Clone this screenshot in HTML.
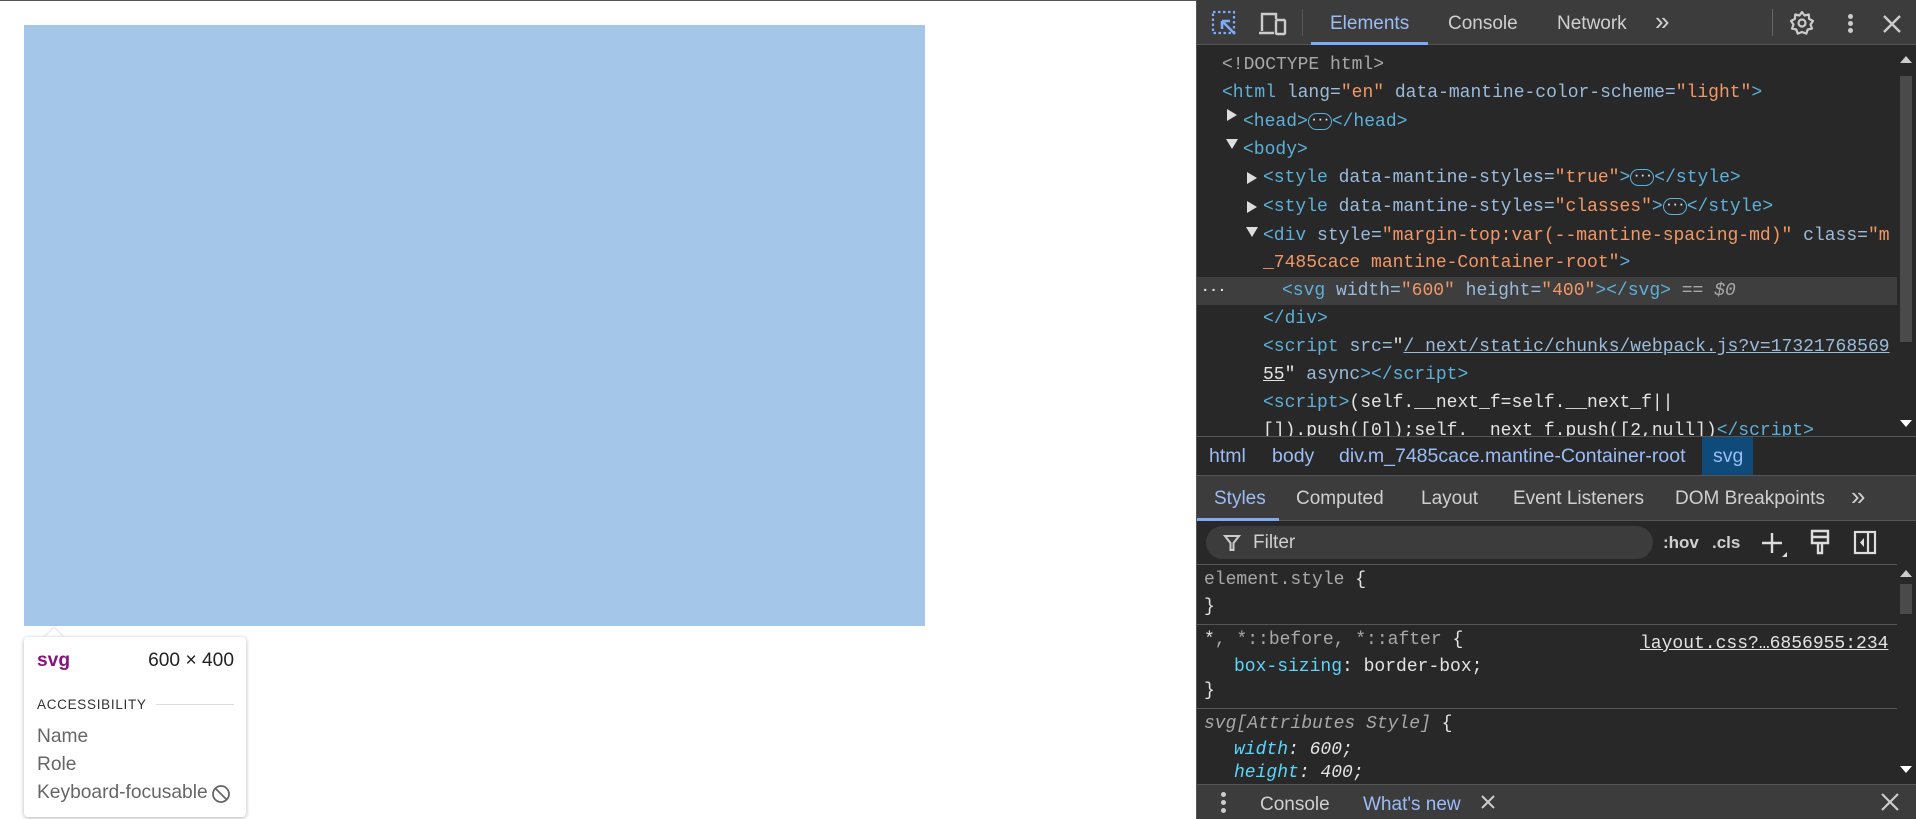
<!DOCTYPE html>
<html><head><style>
*{box-sizing:border-box;margin:0;padding:0}
body{width:1916px;height:819px;overflow:hidden;background:#fff;position:relative;font-family:"Liberation Sans",sans-serif}
.a{position:absolute}
.dt{left:1196px;top:0;width:720px;height:819px;background:#282828;border-left:1px solid #555}
.mono{font-family:"Liberation Mono",monospace;font-size:18px;white-space:pre;color:#e3e3e3}
.t{color:#5db0d7}.n{color:#9bbbdc}.v{color:#f29766}.g{color:#a8a8a8}
.ln{position:absolute;height:28px;line-height:28px}
.tab{position:absolute;font-size:19px;color:#cfcfcf;line-height:24px;white-space:nowrap}
.el{display:inline-block;width:24px;height:17px;border:1px solid #5db0d7;border-radius:9px;font-size:12px;line-height:13px;text-align:center;color:#e3e3e3;vertical-align:middle;font-weight:bold;letter-spacing:-1px}
.tri{position:absolute;width:0;height:0;border-top:6px solid transparent;border-bottom:6px solid transparent;border-left:10px solid #ddd;top:8px}
.trd{position:absolute;width:0;height:0;border-left:6px solid transparent;border-right:6px solid transparent;border-top:10px solid #ddd;top:9px}
</style></head><body>
<div class="a" style="left:0;top:0;width:1196px;height:1px;background:#555"></div>
<div class="a" style="left:24px;top:25px;width:901px;height:601px;background:#a4c6e8"></div>
<div class="a" style="left:44px;top:628px;width:0;height:0;border-left:10px solid transparent;border-right:10px solid transparent;border-bottom:10px solid #fff;filter:drop-shadow(0 -1px 1px rgba(0,0,0,.15))"></div>
<div class="a" style="left:24px;top:637px;width:222px;height:180px;background:#fff;border-radius:4px;box-shadow:0 1px 4px rgba(0,0,0,.3);font-size:19.2px">
<div class="a" style="left:13px;top:13px;color:#881280;font-weight:bold">svg</div>
<div class="a" style="right:12px;top:13px;color:#222">600 × 400</div>
<div class="a" style="left:13px;top:60px;font-size:13.5px;letter-spacing:.7px;color:#333">ACCESSIBILITY</div>
<div class="a" style="left:132px;top:67px;width:78px;height:1px;background:#ddd"></div>
<div class="a" style="left:13px;top:89px;color:#666">Name</div>
<div class="a" style="left:13px;top:117px;color:#666">Role</div>
<div class="a" style="left:13px;top:145px;color:#666">Keyboard-focusable</div>
<svg class="a" style="left:186px;top:146px" width="22" height="22"><circle cx="11" cy="11" r="8" fill="none" stroke="#666" stroke-width="1.8"/><path d="M5.5 5.5L16.5 16.5" stroke="#666" stroke-width="1.8"/></svg>
</div>

<div class="a dt">
<div class="a" style="left:0;top:0;width:720px;height:45px;background:#3c3c3c;border-bottom:1px solid #555"></div>
<svg class="a" style="left:14px;top:10px" width="28" height="28"><rect x="2" y="2" width="21" height="21" fill="none" stroke="#7cacf8" stroke-width="2.2" stroke-dasharray="2.5 2.5"/><path d="M11 11L24 24M11 11h8M11 11v8" stroke="#7cacf8" stroke-width="2.6" fill="none"/></svg>
<svg class="a" style="left:60px;top:10px" width="30" height="28"><path d="M5 21V4h14v5M2 23h15" stroke="#ccc" stroke-width="2.4" fill="none"/><rect x="19" y="10" width="9" height="14" rx="1" fill="none" stroke="#ccc" stroke-width="2.4"/></svg>
<div class="a" style="left:105px;top:9px;width:1px;height:27px;background:#555"></div>
<div class="tab" style="left:133px;top:12px;color:#9bbcf5">Elements</div>
<div class="a" style="left:114px;top:42px;width:117px;height:3px;background:#7cacf8"></div>
<div class="tab" style="left:251px;top:12px">Console</div>
<div class="tab" style="left:360px;top:12px">Network</div>
<div class="tab" style="left:458px;top:9px;font-size:26px">»</div>
<div class="a" style="left:575px;top:9px;width:1px;height:27px;background:#666"></div>
<svg class="a" style="left:591px;top:9px" width="28" height="28"><path d="M14 3l2.5 3.5 4.3-1 .3 4.4 3.9 2.1-2.5 3.5 1.5 4.1-4.3.9-1.4 4.1-4.3-1.6-4.3 1.6-1.4-4.1-4.3-.9 1.5-4.1L3 12l3.9-2.1.3-4.4 4.3 1z" fill="none" stroke="#ccc" stroke-width="2.2" stroke-linejoin="round"/><circle cx="14" cy="14" r="3.5" fill="none" stroke="#ccc" stroke-width="2.2"/></svg>
<div class="a" style="left:651px;top:14px;width:5px;height:5px;border-radius:3px;background:#ccc;box-shadow:0 7px 0 #ccc,0 14px 0 #ccc"></div>
<svg class="a" style="left:685px;top:14px" width="20" height="20"><path d="M2 2L18 18M18 2L2 18" stroke="#ccc" stroke-width="2.4"/></svg>

<div class="a" style="left:0;top:277px;width:700px;height:28px;background:#3e3e3e"></div>
<div class="a mono" style="left:0;top:1px;width:700px;height:435px;overflow:hidden">
<div class="ln g" style="left:25px;top:50px">&lt;!DOCTYPE html&gt;</div>
<div class="ln" style="left:25px;top:78px"><span class="t">&lt;html</span> <span class="n">lang=</span><span class="v">"en"</span> <span class="n">data-mantine-color-scheme=</span><span class="v">"light"</span><span class="t">&gt;</span></div>
<div class="tri" style="left:30px;top:108px"></div>
<div class="ln" style="left:46px;top:107px"><span class="t">&lt;head&gt;</span><span class="el">···</span><span class="t">&lt;/head&gt;</span></div>
<div class="trd" style="left:29px;top:138px"></div>
<div class="ln" style="left:46px;top:135px"><span class="t">&lt;body&gt;</span></div>
<div class="tri" style="left:50px;top:171px"></div>
<div class="ln" style="left:66px;top:163px"><span class="t">&lt;style</span> <span class="n">data-mantine-styles=</span><span class="v">"true"</span><span class="t">&gt;</span><span class="el">···</span><span class="t">&lt;/style&gt;</span></div>
<div class="tri" style="left:50px;top:200px"></div>
<div class="ln" style="left:66px;top:192px"><span class="t">&lt;style</span> <span class="n">data-mantine-styles=</span><span class="v">"classes"</span><span class="t">&gt;</span><span class="el">···</span><span class="t">&lt;/style&gt;</span></div>
<div class="trd" style="left:49px;top:226px"></div>
<div class="ln" style="left:66px;top:221px"><span class="t">&lt;div</span> <span class="n">style=</span><span class="v">"margin-top:var(--mantine-spacing-md)"</span> <span class="n">class=</span><span class="v">"m</span></div>
<div class="ln v" style="left:66px;top:248px">_7485cace mantine-Container-root"<span class="t">&gt;</span></div>
<div class="ln" style="left:4px;top:276px;font-size:14px;font-weight:bold">···</div>
<div class="ln" style="left:85px;top:276px"><span class="t">&lt;svg</span> <span class="n">width=</span><span class="v">"600"</span> <span class="n">height=</span><span class="v">"400"</span><span class="t">&gt;&lt;/svg&gt;</span> <span class="g">== <i>$0</i></span></div>
<div class="ln t" style="left:66px;top:304px">&lt;/div&gt;</div>
<div class="ln" style="left:66px;top:332px"><span class="t">&lt;script</span> <span class="n">src=</span>"<u class="n">/_next/static/chunks/webpack.js?v=17321768569</u></div>
<div class="ln" style="left:66px;top:360px"><u>55</u>" <span class="n">async</span><span class="t">&gt;&lt;/script&gt;</span></div>
<div class="ln" style="left:66px;top:388px"><span class="t">&lt;script&gt;</span>(self.__next_f=self.__next_f||</div>
<div class="ln" style="left:66px;top:416px">[]).push([0]);self.__next_f.push([2,null])<span class="t">&lt;/script&gt;</span></div>
</div>
<div class="a" style="left:700px;top:46px;width:20px;height:390px;background:#282828"></div>
<div class="a" style="left:703px;top:76px;width:12px;height:266px;background:#4a4a4a"></div>
<div class="a" style="left:703px;top:56px;width:0;height:0;border-left:6px solid transparent;border-right:6px solid transparent;border-bottom:7px solid #ccc"></div>
<div class="a" style="left:703px;top:420px;width:0;height:0;border-left:6px solid transparent;border-right:6px solid transparent;border-top:7px solid #fff"></div>

<div class="a" style="left:0;top:436px;width:720px;height:40px;background:#282828;border-top:1px solid #555;border-bottom:1px solid #555;font-size:19.5px;color:#9bbcf5;line-height:38px;white-space:nowrap">
<span class="a" style="left:12px">html</span><span class="a" style="left:75px">body</span><span class="a" style="left:142px">div.m_7485cace.mantine-Container-root</span>
<span class="a" style="left:505px;width:51px;height:38px;background:#0e4a7a;padding-left:11px">svg</span></div>
<div class="a" style="left:0;top:476px;width:720px;height:45px;background:#3c3c3c;border-bottom:1px solid #555"></div>
<div class="tab" style="left:17px;top:487px;color:#9bbcf5">Styles</div>
<div class="a" style="left:0;top:518px;width:82px;height:3px;background:#7cacf8"></div>
<div class="tab" style="left:99px;top:487px">Computed</div>
<div class="tab" style="left:224px;top:487px">Layout</div>
<div class="tab" style="left:316px;top:487px">Event Listeners</div>
<div class="tab" style="left:478px;top:487px">DOM Breakpoints</div>
<div class="tab" style="left:654px;top:484px;font-size:26px">»</div>
<div class="a" style="left:9px;top:526px;width:447px;height:33px;border-radius:17px;background:#3c3c3c"></div>
<svg class="a" style="left:26px;top:533px" width="18" height="20"><path d="M2 3h14l-5.5 7v7h-3v-7z" fill="none" stroke="#ccc" stroke-width="2"/></svg>
<div class="tab" style="left:56px;top:531px">Filter</div>
<div class="tab" style="left:466px;top:531px;font-weight:bold;font-size:17px">:hov</div>
<div class="tab" style="left:515px;top:531px;font-weight:bold;font-size:17px">.cls</div>
<svg class="a" style="left:563px;top:530px" width="28" height="28"><path d="M12 3v20M2 13h20" stroke="#ddd" stroke-width="2.4"/><path d="M27 22v5h-5z" fill="#ddd"/></svg>
<svg class="a" style="left:612px;top:529px" width="22" height="28"><path d="M3 2h16v12H3zM3 8h16M9 14v10h4V14" fill="none" stroke="#ddd" stroke-width="2.4"/></svg>
<svg class="a" style="left:656px;top:529px" width="24" height="28"><rect x="2" y="3" width="20" height="21" fill="none" stroke="#ddd" stroke-width="2.2"/><path d="M15 3v21" stroke="#ddd" stroke-width="2.2"/><path d="M11 9v9l-4-4.5z" fill="#ddd"/></svg>
<div class="a" style="left:0;top:564px;width:700px;height:1px;background:#555"></div>

<div class="a mono" style="left:0;top:566px;width:700px;height:217px;overflow:hidden">
<div class="ln" style="left:7px;top:0"><span class="g">element.style</span> {</div>
<div class="ln" style="left:7px;top:27px">}</div>
<div class="a" style="left:0;top:58px;width:700px;height:1px;background:#555"></div>
<div class="ln" style="left:7px;top:60px">*<span class="g">, *::before, *::after</span> {</div>
<div class="ln" style="left:443px;top:64px"><u>layout.css?…6856955:234</u></div>
<div class="ln" style="left:37px;top:87px"><span style="color:#5cd5fb">box-sizing</span>: border-box;</div>
<div class="ln" style="left:7px;top:111px">}</div>
<div class="a" style="left:0;top:142px;width:700px;height:1px;background:#555"></div>
<div class="ln g" style="left:7px;top:144px"><i>svg[Attributes Style]</i> <span style="color:#e3e3e3">{</span></div>
<div class="ln" style="left:37px;top:170px"><i><span style="color:#5cd5fb">width</span>: 600;</i></div>
<div class="ln" style="left:37px;top:193px"><i><span style="color:#5cd5fb">height</span>: 400;</i></div>
</div>
<div class="a" style="left:700px;top:565px;width:20px;height:218px;background:#282828"></div>
<div class="a" style="left:703px;top:584px;width:12px;height:30px;background:#4a4a4a"></div>
<div class="a" style="left:703px;top:570px;width:0;height:0;border-left:6px solid transparent;border-right:6px solid transparent;border-bottom:7px solid #ccc"></div>
<div class="a" style="left:703px;top:766px;width:0;height:0;border-left:6px solid transparent;border-right:6px solid transparent;border-top:7px solid #fff"></div>

<div class="a" style="left:0;top:784px;width:720px;height:35px;background:#3c3c3c;border-top:1px solid #555"></div>
<div class="a" style="left:24px;top:792px;width:5px;height:5px;border-radius:3px;background:#ccc;box-shadow:0 8px 0 #ccc,0 16px 0 #ccc"></div>
<div class="tab" style="left:63px;top:793px">Console</div>
<div class="tab" style="left:166px;top:793px;color:#9bbcf5">What's new</div>
<svg class="a" style="left:284px;top:795px" width="14" height="14"><path d="M1 1L13 13M13 1L1 13" stroke="#ccc" stroke-width="2"/></svg>
<svg class="a" style="left:684px;top:793px" width="18" height="18"><path d="M1 1L17 17M17 1L1 17" stroke="#ccc" stroke-width="2.2"/></svg>
</div>
</body></html>
